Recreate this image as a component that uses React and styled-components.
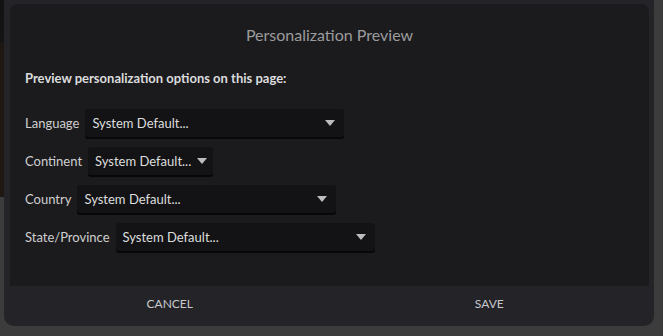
import styled, { createGlobalStyle } from 'styled-components';

const GlobalStyle = createGlobalStyle`
	html, body {
		margin: 0;
		padding: 0;
		height: 100%;
		overflow: hidden;
	}
	body {
		font-family: Lato, 'Noto Sans', sans-serif;
		background:
			linear-gradient(to bottom, #121212 0, #151413 43px, #1f1711 43px, #1f1711 197px, #3c3c3c 197px) left top / 4px 100% no-repeat,
			#3c3c3c;
	}
`;

const Page = styled.div`
	padding-left: 4px;
`;

const Dialog = styled.div`
	width: 650px;
	height: 326px;
	box-sizing: border-box;
	background-color: #232328;
	border-radius: 0 0 10px 10px;
	display: flex;
	flex-direction: column;
	padding: 4px 5px 0 6px;
`;

const Body = styled.div`
	height: 282px;
	box-sizing: border-box;
	background-color: #1b1b1e;
	border-radius: 8px 8px 0 0;
	padding: 21px 15px 0;
	display: flex;
	flex-direction: column;
`;

const Title = styled.h2`
	margin: 0;
	font-size: 16px;
	line-height: 20px;
	font-weight: 400;
	color: #9b9b9d;
	text-align: center;
`;

const Intro = styled.p`
	margin: 25px 0 23px;
	font-size: 13px;
	line-height: 16px;
	font-weight: 700;
	color: #dcdcdc;
`;

const Fields = styled.div`
	display: flex;
	flex-direction: column;
	gap: 10px;
`;

const Row = styled.div`
	display: flex;
	align-items: center;
	gap: 6px;
`;

const Label = styled.span`
	font-size: 13px;
	color: #cfcfcf;
`;

const Select = styled.div`
	width: ${({ $wide }) => ($wide ? '259px' : 'auto')};
	height: 28px;
	box-sizing: border-box;
	display: flex;
	align-items: center;
	justify-content: space-between;
	gap: 6px;
	padding: 0 ${({ $wide }) => ($wide ? '9px' : '6px')} 0 7px;
	background-color: #131315;
	border-radius: 3px;
	box-shadow: 0 2px 0 #070708;
	font-size: 13px;
	color: #dedede;
	cursor: pointer;
`;

const Arrow = styled.svg`
	width: 10px;
	height: 6px;
	flex-shrink: 0;
`;

const Footer = styled.div`
	flex: 1;
	display: grid;
	grid-template-columns: 1fr 1fr;
`;

const FooterButton = styled.button`
	background: none;
	border: none;
	font-family: inherit;
	font-size: 12px;
	color: #c9c9cb;
	text-transform: uppercase;
	cursor: pointer;
	padding: 0 0 6px;
`;

const fields = [
	{ label: 'Language', wide: true },
	{ label: 'Continent', wide: false },
	{ label: 'Country', wide: true },
	{ label: 'State/Province', wide: true },
];

function DropDown({ wide }) {
	return (
		<Select $wide={wide}>
			<span>System Default...</span>
			<Arrow viewBox="0 0 10 6">
				<path d="M0 0 L10 0 L5 6 Z" fill="#bdbdbf" />
			</Arrow>
		</Select>
	);
}

export default function App() {
	return (
		<Page>
			<GlobalStyle />
			<Dialog>
				<Body>
					<Title>Personalization Preview</Title>
					<Intro>Preview personalization options on this page:</Intro>
					<Fields>
						{fields.map((f) => (
							<Row key={f.label}>
								<Label>{f.label}</Label>
								<DropDown wide={f.wide} />
							</Row>
						))}
					</Fields>
				</Body>
				<Footer>
					<FooterButton>Cancel</FooterButton>
					<FooterButton>Save</FooterButton>
				</Footer>
			</Dialog>
		</Page>
	);
}
